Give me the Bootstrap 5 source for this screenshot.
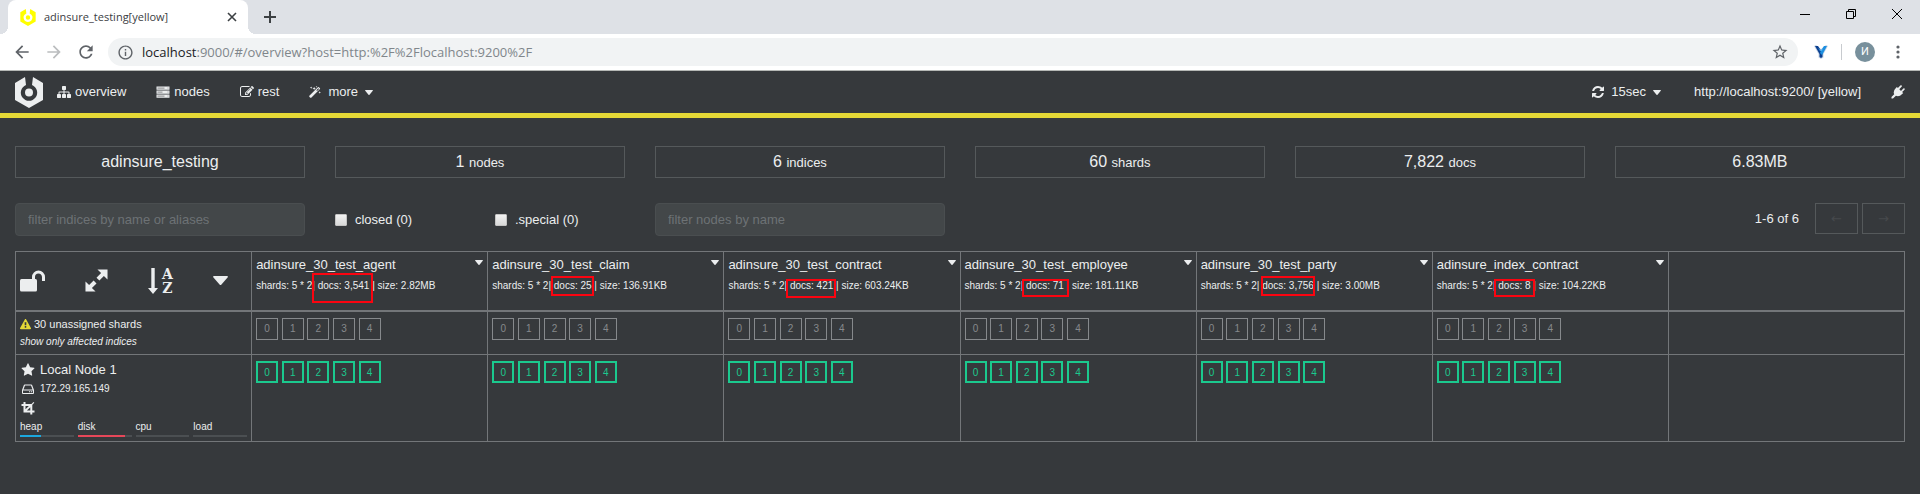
<!DOCTYPE html>
<html lang="en">
<head>
<meta charset="utf-8">
<meta name="viewport" content="width=device-width, initial-scale=1">
<title>adinsure_testing[yellow]</title>
<link href="https://cdn.jsdelivr.net/npm/bootstrap@5.3.0/dist/css/bootstrap.min.css" rel="stylesheet">
<style>
  :root { --ink: #eceeef; --bg: #36393c; --line: #737679; --yellow: #e4d836; }
  body { background: var(--bg); color: var(--ink); font: 13px/20px "Liberation Sans", Arial, sans-serif; min-height: 100vh; }
  svg { display: block; fill: currentColor; flex: none; }
  button { background: none; border: 0; padding: 0; color: inherit; }
  a { color: inherit; text-decoration: none; }
  .i12 { width: 12px; height: 12px; }
  .i14 { width: 14px; height: 14px; }
  .i20 { width: 20px; height: 20px; }
  .caret-lg { width: 15px; height: 9px; }
  .caret-sm { width: 8px; height: 5px; }

  /* browser frame */
  .tabstrip { background: #dee1e6; height: 34px; padding-left: 8px; color: #3c4043; }
  .page-tab { background: #fff; width: 240px; border-radius: 8px 8px 0 0; padding: 0 11px 0 12px; font: 11px/34px "Open Sans", sans-serif; position: relative; }
  .page-tab::before, .page-tab::after { content: ""; position: absolute; bottom: 0; width: 8px; height: 8px; }
  .page-tab::before { left: -8px; background: radial-gradient(circle at 0 0, transparent 8px, #fff 8px); }
  .page-tab::after { right: -8px; background: radial-gradient(circle at 100% 0, transparent 8px, #fff 8px); }
  .win-btn { width: 46px; height: 28px; display: grid; place-items: center; color: #000; }
  .toolbar { background: #fff; height: 37px; border-bottom: 1px solid #b5b8b5; color: #5f6368; padding: 0 20px 0 12px; }
  .toolbar .nav-icons { gap: 12px; }
  .omnibox { background: #f1f3f4; height: 28px; border-radius: 14px; margin-left: 12px; padding: 0 9px; }
  .addr { font: 13px/20px "Open Sans", sans-serif; color: #80868b; }
  .addr b { font-weight: 400; color: #202124; }
  .tool-end { gap: 13px; }
  .avatar { width: 20px; height: 20px; border-radius: 50%; background: #78909c; color: #fff; font: 11px/20px Roboto, sans-serif; text-align: center; }
  .divider { width: 1px; height: 16px; background: #c8cbcf; }

  /* application */
  .appbar { height: 47px; border-bottom: 5px solid var(--yellow); padding: 0 15px; }
  .appbar .brand { margin-right: 14px; }
  .menu, .menu-end { gap: 30px; }
  .menu a, .menu button, .menu-end button { display: flex; align-items: center; gap: 4px; }
  .menu .drop, .menu-end .drop { gap: 7px; }
  .menu-end .drop { margin-right: 3px; }
  .main-area { --bs-gutter-x: 30px; padding-top: 28px; }
  .main-area .row { --bs-gutter-x: 30px; }
  .stat { border: 1px solid #55595b; height: 32px; line-height: 30px; font-size: 16px; text-align: center; margin-bottom: 25px; }
  .stat small { font-size: 13px; }
  .filter { width: 100%; height: 33px; background: #434749; border: 1px solid #4a4e50; border-radius: 4px; padding: 0 12px; color: var(--ink); }
  .filter::placeholder { color: #6d7275; opacity: 1; }
  .tick { appearance: none; width: 12px; height: 12px; margin: 0; background: linear-gradient(#f2f2f2, #d8d8d8); border: 1px solid #c4c4c4; border-radius: 1px; }
  .tick:checked { background: #1ca8dd; }
  .tick-label { gap: 8px; height: 33px; }
  .range { line-height: 31px; margin-right: 12px; }
  .pager { width: 43px; height: 31px; border: 1px solid #55595b; font-family: "DejaVu Sans", sans-serif; }
  .pager:disabled { color: #46494c; }

  .grid-table { width: 100%; table-layout: fixed; border-collapse: collapse; margin-top: 15px; }
  .grid-table th, .grid-table td { border: 1px solid var(--line); padding: 4px; vertical-align: top; font-weight: 400; }
  .grid-table th { padding-top: 3px; }
  .grid-table thead tr { height: 59px; border-bottom: 2px solid var(--line); }
  .grid-table .row-unassigned { height: 43px; }
  .grid-table .row-unassigned td { padding-bottom: 2px; }
  .grid-table .row-node { height: 87px; }
  .grid-table .row-node td:first-child { padding-top: 5px; padding-bottom: 3px; }
  .tools { gap: 40px; height: 51px; }
  .az { font: bold 14px/14px "DejaVu Serif", serif; }
  .meta { font-size: 10px; }
  .index-meta { font-size: 10px; padding-top: 1px; }
  .warn-text { font-size: 11px; line-height: 16px; gap: 3px; }
  .affected { font-size: 10px; line-height: 20px; }
  .shards { padding-top: 2px; white-space: nowrap; }
  .shard { display: inline-block; vertical-align: top; width: 22px; height: 22px; border: 1px solid #86898c; color: #86898c; font-size: 10px; line-height: 20px; text-align: center; }
  .shard.on { border: 2px solid #1bc98e; color: #1bc98e; line-height: 19px; }
  .node-line { gap: 5px; padding-left: 1px; height: 19px; }
  .gauges { display: grid; grid-template-columns: repeat(4, 1fr); gap: 4px; font-size: 10px; line-height: 16px; padding-top: 2px; }
  .gauge { height: 2px; background: #4b4f52; }
  .gauge > div { height: 2px; }
  .callout { position: absolute; border: 2px solid #fb0410; }
  .c1 { left: 56px; top: 18px; width: 61px; height: 30px; }
  .c2 { left: 59px; top: 21px; width: 43px; height: 20px; }
  .c3 { left: 58px; top: 24px; width: 50px; height: 19px; }
  .c4 { left: 57px; top: 24px; width: 47px; height: 18px; }
  .c5 { left: 60px; top: 21px; width: 54px; height: 20px; }
  .c6 { left: 57px; top: 24px; width: 41px; height: 18px; }
  .idx-caret { margin-top: 5px; height: 5px; }
</style>
</head>
<body>
<svg width="0" height="0" class="position-absolute" aria-hidden="true">
  <symbol id="cerebro" viewBox="0 0 28 31"><path fill-rule="evenodd" d="M0 6 10 0 11 8A8.200 8.200 0 1 0 17 8L18 0 28 6V23L14 31 0 23ZM14 11.500a4 4 0 1 1 0 8a4 4 0 1 1 0-8Z"/></symbol>
  <symbol id="caret" viewBox="0 0 16 9" preserveAspectRatio="none"><path d="M1 0H15Q16.500 0 15.500 1.500L9 8.500Q8 9.500 7 8.500L.5 1.500Q-.5 0 1 0Z"/></symbol>
  <symbol id="sitemap" viewBox="0 0 1792 1792"><path d="M1792 1248v320q0 40-28 68t-68 28h-320q-40 0-68-28t-28-68v-320q0-40 28-68t68-28h96v-192h-512v192h96q40 0 68 28t28 68v320q0 40-28 68t-68 28h-320q-40 0-68-28t-28-68v-320q0-40 28-68t68-28h96v-192h-512v192h96q40 0 68 28t28 68v320q0 40-28 68t-68 28h-320q-40 0-68-28t-28-68v-320q0-40 28-68t68-28h96v-192q0-52 38-90t90-38h512v-192h-96q-40 0-68-28t-28-68v-320q0-40 28-68t68-28h320q40 0 68 28t28 68v320q0 40-28 68t-68 28h-96v192h512q52 0 90 38t38 90v192h96q40 0 68 28t28 68z"/></symbol>
  <symbol id="server" viewBox="0 0 14 14"><path fill-rule="evenodd" d="M.5 1.500h13v3.300H.5zM.5 5.500h13v3.300H.5zM.5 9.500h13v3.300H.5z"/><path d="M1.500 2.600h7v1.200h-7zM1.500 6.600h5v1.200h-5zM1.500 10.600h7v1.200h-7zM11.500 2.600h1v1h-1zM11.500 6.600h1v1h-1zM11.500 10.600h1v1h-1z" fill="#9a9c9e"/></symbol>
  <symbol id="edit" viewBox="0 0 1792 1792"><path d="M888 1184l116-116-152-152-116 116v56h96v96h56zm440-720q-16-16-33 1l-350 350q-17 17-1 33t33-1l350-350q17-17 1-33zm80 594v190q0 119-84.500 203.500t-203.500 84.500h-832q-119 0-203.500-84.500t-84.500-203.500v-832q0-119 84.500-203.500t203.500-84.500h832q63 0 117 25 15 7 18 23 3 17-9 29l-49 49q-14 14-32 8-23-6-45-6h-832q-66 0-113 47t-47 113v832q0 66 47 113t113 47h832q66 0 113-47t47-113v-126q0-13 9-22l64-64q15-15 35-7t20 29zm-96-738l288 288-672 672h-288v-288zm444 132l-92 92-288-288 92-92q28-28 68-28t68 28l152 152q28 28 28 68t-28 68z"/></symbol>
  <symbol id="magic" viewBox="0 0 14 14"><path fill-rule="evenodd" d="M.4 11.400 10.400 1.400Q11 .8 11.600 1.400L12.800 2.600Q13.200 3 12.800 3.600L2.600 13.600Q2 14 1.400 13.600L.4 12.600Q0 12 .4 11.400ZM8.600 4.900 9.400 5.700 11.700 3.400 10.900 2.600ZM2.500.5 2.900 1.600 4 2 2.900 2.400 2.500 3.500 2.100 2.400 1 2 2.100 1.600ZM6 .8 6.600 2.200 8 2.800 6.600 3.400 6 4.800 5.400 3.400 4 2.800 5.400 2.200ZM12.500 6 12.900 7.100 14 7.500 12.900 7.900 12.500 9 12.100 7.900 11 7.500 12.100 7.100ZM8.800 0 9.100.7 9.800 1 9.100 1.300 8.800 2 8.500 1.300 7.800 1 8.500.7Z"/></symbol>
  <symbol id="sync" viewBox="128 128 1536 1536"><path d="M1639 1056q0 5-1 7-64 268-268 434.500t-478 166.500q-146 0-282.500-55t-243.500-157l-129 129q-19 19-45 19t-45-19-19-45v-448q0-26 19-45t45-19h448q26 0 45 19t19 45-19 45l-137 137q71 66 161 102t187 36q134 0 250-65t186-179q11-17 53-117 8-23 30-23h192q13 0 22.500 9.500t9.500 22.500zm25-800v448q0 26-19 45t-45 19h-448q-26 0-45-19t-19-45 19-45l138-138q-148-137-349-137-134 0-250 65t-186 179q-11 17-53 117-8 23-30 23h-199q-13 0-22.500-9.500t-9.500-22.500v-7q65-268 270-434.500t480-166.500q146 0 284 55.500t245 156.500l130-129q19-19 45-19t45 19 19 45z"/></symbol>
  <symbol id="plug" viewBox="0 0 14 14"><path d="M9.300.6Q10-.1 10.700.6 11.200 1.200 10.600 1.800L8.300 4.200 10 5.900 12.300 3.500Q13 2.900 13.500 3.400 14.100 4 13.500 4.700L11.100 7 12.200 8.100 11.200 9.100Q8 12.300 4.900 10.800L2 13.500H.5V12L3.200 9.200Q1.700 6 4.900 2.900L5.900 1.900 6.900 2.900Z"/></symbol>
  <symbol id="star" viewBox="0 0 1792 1792"><path d="M1728 647q0 22-26 48l-363 354 86 500q1 7 1 20 0 21-10.500 35.500t-30.500 14.500q-19 0-40-12l-449-236-449 236q-22 12-40 12-21 0-31.500-14.500t-10.500-35.500q0-6 2-20l86-500-364-354q-25-27-25-48 0-37 56-46l502-73 225-455q19-41 49-41t49 41l225 455 502 73q56 9 56 46z"/></symbol>
  <symbol id="warn" viewBox="0 0 1792 1792"><path d="M1024 1375v-190q0-14-9.500-23.500t-22.500-9.500h-192q-13 0-22.500 9.500t-9.500 23.500v190q0 14 9.500 23.500t22.500 9.500h192q13 0 22.500-9.500t9.500-23.500zm-2-374l18-459q0-12-10-19-13-11-24-11h-220q-11 0-24 11-10 7-10 21l17 457q0 10 10 16.500t24 6.500h185q14 0 23.500-6.500t10.500-16.500zm-14-934l768 1408q35 63-2 126-17 29-46.500 46t-63.500 17h-1536q-34 0-63.500-17t-46.500-46q-37-63-2-126l768-1408q17-31 47-49t65-18 65 18 47 49z"/></symbol>
</svg>

<header>
  <div class="tabstrip d-flex align-items-start">
    <div class="page-tab d-flex align-items-center">
      <svg class="me-2" width="16" height="17" color="#ffff00"><use href="#cerebro"/></svg>
      <span class="flex-grow-1 text-nowrap">adinsure_testing[yellow]</span>
      <button type="button" aria-label="Close tab"><svg width="10" height="10" viewBox="0 0 10 10"><path d="M1 1 9 9M9 1 1 9" stroke="currentColor" stroke-width="1.600"/></svg></button>
    </div>
    <button type="button" class="ms-3 align-self-center" aria-label="New tab"><svg width="12" height="12" viewBox="0 0 12 12"><path d="M0 6H12M6 0V12" stroke="currentColor" stroke-width="2"/></svg></button>
    <div class="d-flex ms-auto">
      <button type="button" class="win-btn" aria-label="Minimize"><svg width="10" height="10"><path d="M0 5h10v1H0z"/></svg></button>
      <button type="button" class="win-btn" aria-label="Restore"><svg width="10" height="10" stroke="#000"><path d="M.5 2.500h7v7h-7zM2.500 2.500v-2h7v7h-2" fill="none"/></svg></button>
      <button type="button" class="win-btn" aria-label="Close"><svg width="10" height="10" stroke="#000"><path d="M0 0 10 10M10 0 0 10"/></svg></button>
    </div>
  </div>
  <div class="toolbar d-flex align-items-center">
    <div class="nav-icons d-flex">
      <button type="button" aria-label="Back"><svg class="i20" viewBox="0 0 24 24"><path d="M20 11H7.830l5.590-5.590L12 4l-8 8 8 8 1.410-1.410L7.830 13H20v-2z"/></svg></button>
      <button type="button" aria-label="Forward"><svg class="i20" viewBox="0 0 24 24" color="#bbbdbf"><path d="M12 4l-1.410 1.410L16.170 11H4v2h12.170l-5.580 5.590L12 20l8-8z"/></svg></button>
      <button type="button" aria-label="Reload"><svg class="i20" viewBox="0 0 24 24"><path d="M17.650 6.350C16.200 4.900 14.210 4 12 4c-4.420 0-7.990 3.580-7.990 8s3.570 8 7.990 8c3.730 0 6.840-2.550 7.730-6h-2.080c-.82 2.330-3.040 4-5.650 4-3.310 0-6-2.690-6-6s2.690-6 6-6c1.660 0 3.140.69 4.220 1.780L13 11h7V4l-2.350 2.350z"/></svg></button>
    </div>
    <div class="omnibox d-flex align-items-center flex-grow-1">
      <svg class="me-2" width="17" height="17" viewBox="0 0 24 24"><path d="M11 17h2v-6h-2v6zm1-15C6.480 2 2 6.480 2 12s4.480 10 10 10 10-4.480 10-10S17.520 2 12 2zm0 18c-4.410 0-8-3.590-8-8s3.590-8 8-8 8 3.590 8 8-3.590 8-8 8zM11 9h2V7h-2v2z"/></svg>
      <span class="addr flex-grow-1 text-nowrap"><b>localhost</b>:9000/#/overview?host=http:%2F%2Flocalhost:9200%2F</span>
      <button type="button" aria-label="Bookmark"><svg width="18" height="18" viewBox="0 0 24 24"><path d="M22 9.240l-7.190-.62L12 2 9.190 8.630 2 9.240l5.460 4.730L5.820 21 12 17.270 18.180 21l-1.630-7.030L22 9.240zM12 15.400l-3.760 2.270 1-4.280-3.320-2.880 4.380-.38L12 6.100l1.710 4.040 4.380.38-3.320 2.880 1 4.280L12 15.400z"/></svg></button>
    </div>
    <div class="tool-end d-flex align-items-center ps-3">
      <svg width="14" height="14" viewBox="0 0 14 14"><path d="M0 1 2 0 7 4 12 0 14 1 9.500 9V12.500L7 14 4.500 12.500V9Z" fill="#c9d6e6"/><path d="M1 1 4 1 7 5.500 8.500 8V12L7 13 5.500 12V9Z" fill="#0b3f8f"/><path d="M13 1 10 1 7 5.500 6 8 8 10 9 8.500Z" fill="#1d8fe0"/><path d="M4 3 7 5.500 9 3 8 6H6Z" fill="#4db4f5"/></svg>
      <span class="divider"></span>
      <span class="avatar">И</span>
      <button type="button" class="ms-2" aria-label="Menu"><svg width="4" height="14" viewBox="0 0 4 14"><circle cx="2" cy="2" r="1.600"/><circle cx="2" cy="7" r="1.600"/><circle cx="2" cy="12" r="1.600"/></svg></button>
    </div>
  </div>
</header>

<nav class="appbar d-flex align-items-center">
  <a href="#" class="brand" aria-label="Cerebro"><svg width="28" height="31"><use href="#cerebro"/></svg></a>
  <div class="menu d-flex">
    <a href="#overview"><svg class="i14"><use href="#sitemap"/></svg>overview</a>
    <a href="#nodes"><svg class="i14"><use href="#server"/></svg>nodes</a>
    <a href="#rest"><svg class="i14"><use href="#edit"/></svg>rest</a>
    <button type="button" class="drop"><svg class="i12"><use href="#magic"/></svg><span>more</span><svg class="caret-sm"><use href="#caret"/></svg></button>
  </div>
  <div class="menu-end d-flex align-items-center ms-auto">
    <button type="button" class="drop"><svg class="i12"><use href="#sync"/></svg><span>15sec</span><svg class="caret-sm"><use href="#caret"/></svg></button>
    <a href="#host">http://localhost:9200/ [yellow]</a>
    <a href="#connect" aria-label="Connect"><svg class="i14"><use href="#plug"/></svg></a>
  </div>
</nav>

<main class="main-area container-fluid">
  <div class="row">
    <div class="col-2"><div class="stat">adinsure_testing</div></div>
    <div class="col-2"><div class="stat">1 <small>nodes</small></div></div>
    <div class="col-2"><div class="stat">6 <small>indices</small></div></div>
    <div class="col-2"><div class="stat">60 <small>shards</small></div></div>
    <div class="col-2"><div class="stat">7,822 <small>docs</small></div></div>
    <div class="col-2"><div class="stat">6.83MB</div></div>
  </div>
  <div class="row">
    <div class="col-2"><input class="filter" type="text" placeholder="filter indices by name or aliases" aria-label="Filter indices"></div>
    <div class="col-1"><label class="tick-label d-flex align-items-center text-nowrap"><input class="tick" type="checkbox">closed (0)</label></div>
    <div class="col-1"><label class="tick-label d-flex align-items-center text-nowrap"><input class="tick" type="checkbox">.special (0)</label></div>
    <div class="col-2"><input class="filter" type="text" placeholder="filter nodes by name" aria-label="Filter nodes"></div>
    <div class="col-6 d-flex justify-content-end align-items-start gap-1">
      <span class="range">1-6 of 6</span>
      <button type="button" class="pager" disabled aria-label="Previous page">←</button>
      <button type="button" class="pager" disabled aria-label="Next page">→</button>
    </div>
  </div>

  <table class="grid-table">
    <thead>
      <tr>
        <th>
          <div class="tools d-flex align-items-center">
            <button type="button" aria-label="Unlock"><svg width="25" height="22" viewBox="0 0 25 22"><rect y="9" width="17" height="12.500" rx="1.500"/><path d="M13.500 10V7a5 5 0 0 1 10 0V11" fill="none" stroke="currentColor" stroke-width="3"/></svg></button>
            <button type="button" aria-label="Expand"><svg width="23" height="23" viewBox="0 0 24 24"><path d="M13 .5H23.500V11L19.700 7.200 15 12 12 9 16.800 4.300ZM11 23.500H.5V13L4.300 16.800 9 12 12 15 7.200 19.700Z"/></svg></button>
            <button type="button" class="d-flex align-items-center" aria-label="Sort by name"><svg class="me-1" width="10" height="26" viewBox="0 0 10 26"><path d="M3.300 0H6.700V20H10L5 26 0 20H3.300Z"/></svg><span class="az">A<br>Z</span></button>
            <button type="button" aria-label="Options"><svg class="caret-lg"><use href="#caret"/></svg></button>
          </div>
        </th>
        <th><div class="position-relative"><div class="d-flex justify-content-between align-items-start"><span>adinsure_30_test_agent</span><button type="button" class="idx-caret" aria-label="Index menu"><svg class="caret-sm"><use href="#caret"/></svg></button></div><div class="index-meta">shards: 5 * 2| docs: 3,541 | size: 2.82MB</div><div class="callout c1"></div></div></th>
        <th><div class="position-relative"><div class="d-flex justify-content-between align-items-start"><span>adinsure_30_test_claim</span><button type="button" class="idx-caret" aria-label="Index menu"><svg class="caret-sm"><use href="#caret"/></svg></button></div><div class="index-meta">shards: 5 * 2| docs: 25 | size: 136.91KB</div><div class="callout c2"></div></div></th>
        <th><div class="position-relative"><div class="d-flex justify-content-between align-items-start"><span>adinsure_30_test_contract</span><button type="button" class="idx-caret" aria-label="Index menu"><svg class="caret-sm"><use href="#caret"/></svg></button></div><div class="index-meta">shards: 5 * 2| docs: 421 | size: 603.24KB</div><div class="callout c3"></div></div></th>
        <th><div class="position-relative"><div class="d-flex justify-content-between align-items-start"><span>adinsure_30_test_employee</span><button type="button" class="idx-caret" aria-label="Index menu"><svg class="caret-sm"><use href="#caret"/></svg></button></div><div class="index-meta">shards: 5 * 2| docs: 71 | size: 181.11KB</div><div class="callout c4"></div></div></th>
        <th><div class="position-relative"><div class="d-flex justify-content-between align-items-start"><span>adinsure_30_test_party</span><button type="button" class="idx-caret" aria-label="Index menu"><svg class="caret-sm"><use href="#caret"/></svg></button></div><div class="index-meta">shards: 5 * 2| docs: 3,756 | size: 3.00MB</div><div class="callout c5"></div></div></th>
        <th><div class="position-relative"><div class="d-flex justify-content-between align-items-start"><span>adinsure_index_contract</span><button type="button" class="idx-caret" aria-label="Index menu"><svg class="caret-sm"><use href="#caret"/></svg></button></div><div class="index-meta">shards: 5 * 2| docs: 8 | size: 104.22KB</div><div class="callout c6"></div></div></th>
        <th></th>
      </tr>
    </thead>
    <tbody>
      <tr class="row-unassigned">
        <td>
          <div class="warn-text d-flex align-items-center"><svg width="11" height="11" color="#e4d836"><use href="#warn"/></svg>30 unassigned shards</div>
          <a href="#affected" class="affected fst-italic d-block">show only affected indices</a>
        </td>
        <td><div class="shards"><span class="shard">0</span> <span class="shard">1</span> <span class="shard">2</span> <span class="shard">3</span> <span class="shard">4</span></div></td>
        <td><div class="shards"><span class="shard">0</span> <span class="shard">1</span> <span class="shard">2</span> <span class="shard">3</span> <span class="shard">4</span></div></td>
        <td><div class="shards"><span class="shard">0</span> <span class="shard">1</span> <span class="shard">2</span> <span class="shard">3</span> <span class="shard">4</span></div></td>
        <td><div class="shards"><span class="shard">0</span> <span class="shard">1</span> <span class="shard">2</span> <span class="shard">3</span> <span class="shard">4</span></div></td>
        <td><div class="shards"><span class="shard">0</span> <span class="shard">1</span> <span class="shard">2</span> <span class="shard">3</span> <span class="shard">4</span></div></td>
        <td><div class="shards"><span class="shard">0</span> <span class="shard">1</span> <span class="shard">2</span> <span class="shard">3</span> <span class="shard">4</span></div></td>
        <td></td>
      </tr>
      <tr class="row-node">
        <td>
          <div class="node-line d-flex align-items-center"><svg class="i14"><use href="#star"/></svg>Local Node 1</div>
          <div class="node-line meta d-flex align-items-center"><svg class="i14" viewBox="0 0 14 14"><path fill-rule="evenodd" d="M3.800 2.500H10.200Q11 2.500 11.200 3.200L13 8V11Q13 12 12 12H2Q1 12 1 11V8L2.800 3.200Q3 2.500 3.800 2.500ZM4 3.500 2.500 7.500H11.500L10 3.500ZM2 8.500V11H12V8.500ZM8 9.200H9.200V10.300H8ZM10 9.200H11.200V10.300H10Z"/></svg>172.29.165.149</div>
          <div class="node-line d-flex align-items-center"><svg class="i14" viewBox="0 0 14 14"><path fill-rule="evenodd" d="M2.500 1H4.500V3H10.500L12.500 1 13.300 1.800 11.300 3.800V9.500H13.500V11.500H11.300V13.500H9.300V11.500H2.500V5H.5V3H2.500ZM4.500 5V8.200L7.900 5ZM9.300 6.200 5.900 9.500H9.300Z"/></svg></div>
          <div class="gauges">
            <div>heap<div class="gauge"><div style="width:39%;background:#1ca8dd"></div></div></div>
            <div>disk<div class="gauge"><div style="width:88%;background:#e64759"></div></div></div>
            <div>cpu<div class="gauge"></div></div>
            <div>load<div class="gauge"></div></div>
          </div>
        </td>
        <td><div class="shards"><span class="shard on">0</span> <span class="shard on">1</span> <span class="shard on">2</span> <span class="shard on">3</span> <span class="shard on">4</span></div></td>
        <td><div class="shards"><span class="shard on">0</span> <span class="shard on">1</span> <span class="shard on">2</span> <span class="shard on">3</span> <span class="shard on">4</span></div></td>
        <td><div class="shards"><span class="shard on">0</span> <span class="shard on">1</span> <span class="shard on">2</span> <span class="shard on">3</span> <span class="shard on">4</span></div></td>
        <td><div class="shards"><span class="shard on">0</span> <span class="shard on">1</span> <span class="shard on">2</span> <span class="shard on">3</span> <span class="shard on">4</span></div></td>
        <td><div class="shards"><span class="shard on">0</span> <span class="shard on">1</span> <span class="shard on">2</span> <span class="shard on">3</span> <span class="shard on">4</span></div></td>
        <td><div class="shards"><span class="shard on">0</span> <span class="shard on">1</span> <span class="shard on">2</span> <span class="shard on">3</span> <span class="shard on">4</span></div></td>
        <td></td>
      </tr>
    </tbody>
  </table>
</main>
<script src="https://cdn.jsdelivr.net/npm/bootstrap@5.3.0/dist/js/bootstrap.bundle.min.js"></script>
</body>
</html>
